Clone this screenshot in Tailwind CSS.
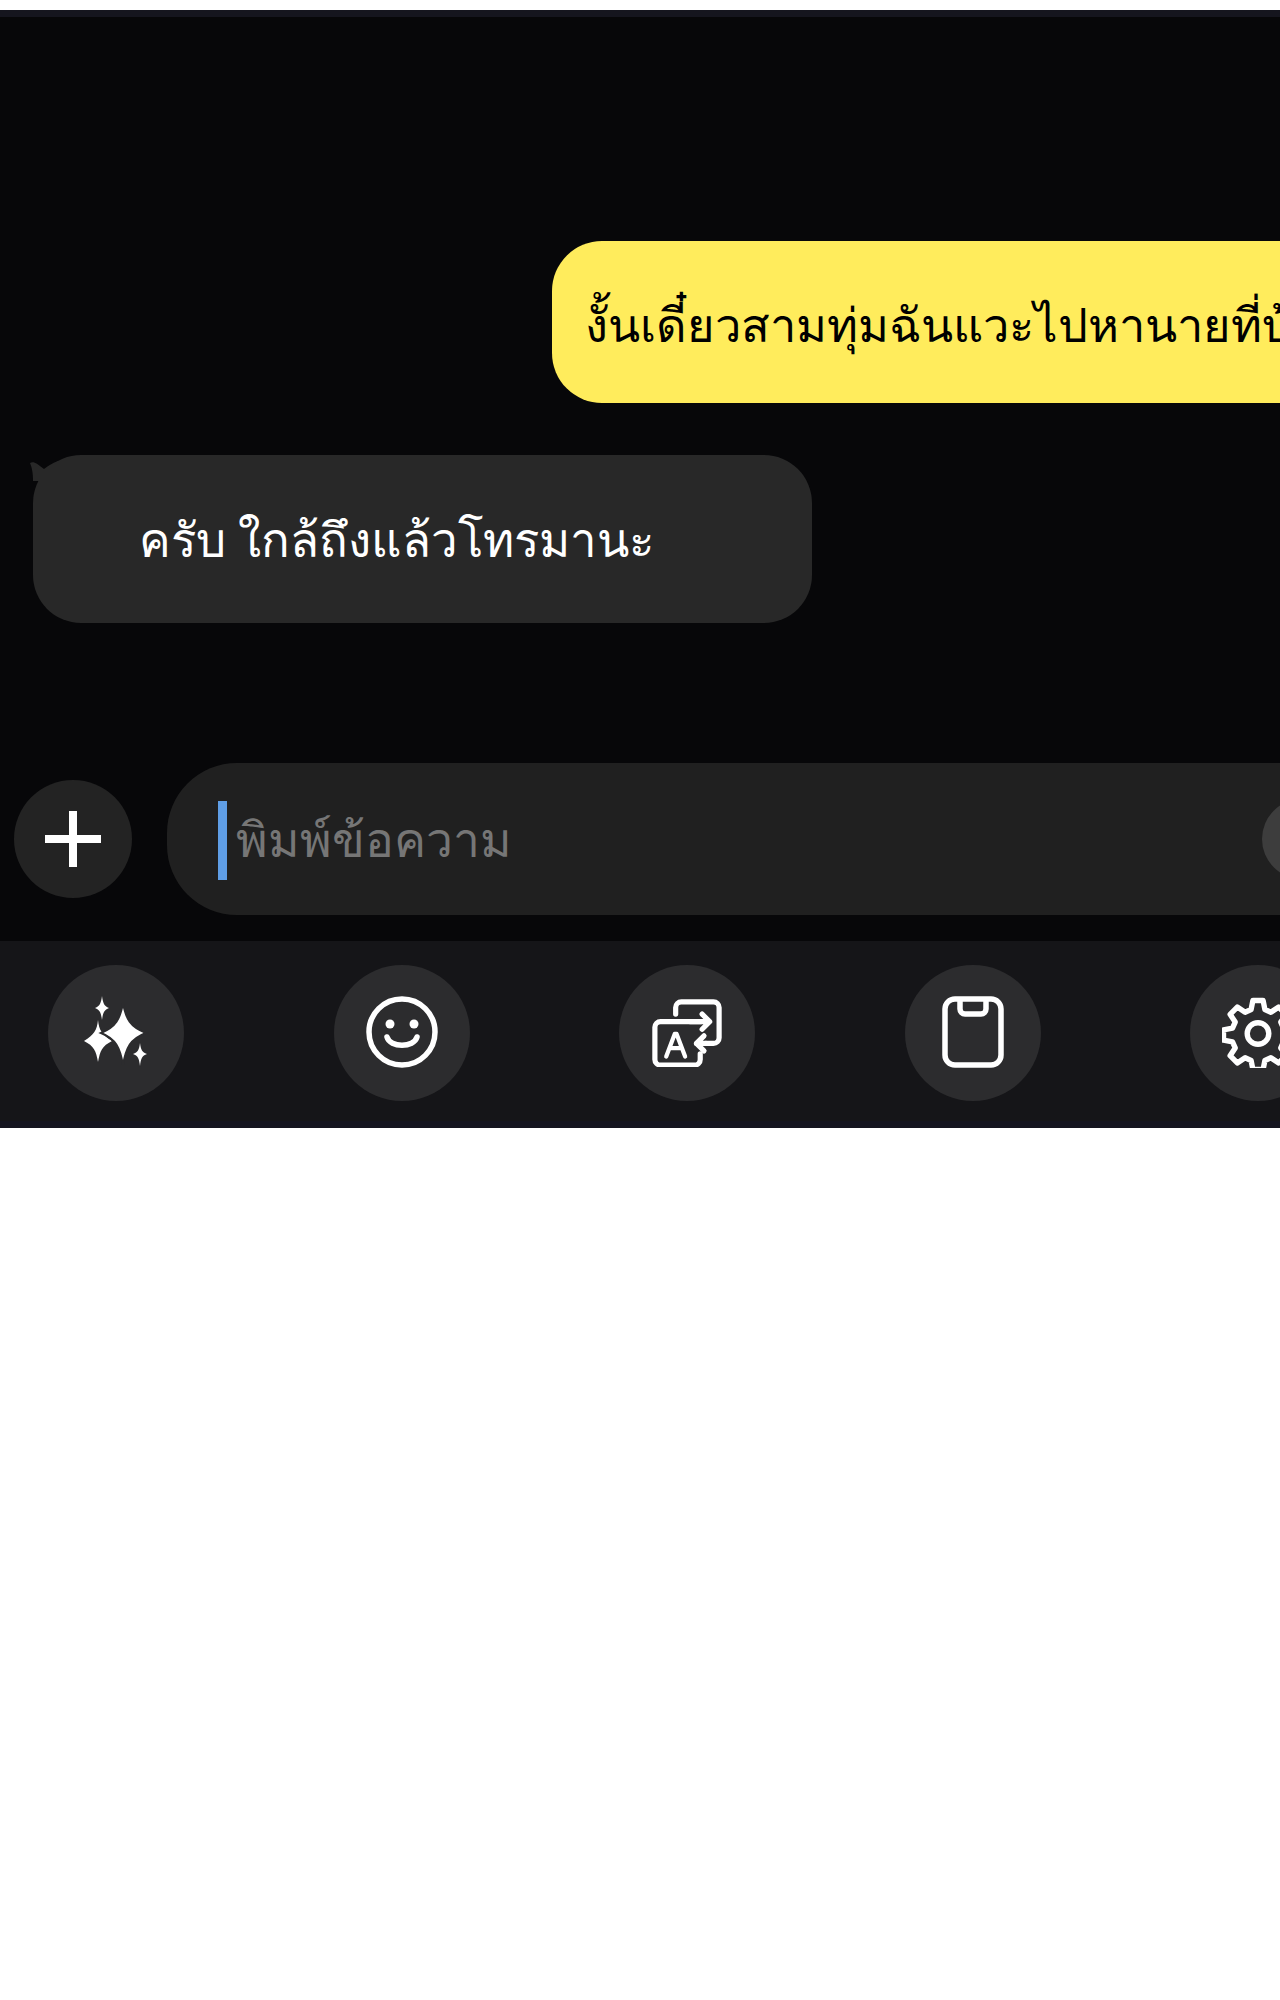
<!DOCTYPE html>
<html lang="th">
<head>
    <meta charset="UTF-8">
    <meta name="viewport" content="width=device-width, initial-scale=1.0">
    <title>แชท</title>
    <script src="https://cdn.jsdelivr.net/npm/@tailwindcss/browser@4"></script>
</head>
<body class="bg-white font-['Noto_Sans','Liberation_Sans',sans-serif] overflow-hidden">
    <div class="w-[1280px] h-[2000px] overflow-hidden pt-[10px]">
        <!-- pantalla -->
        <div class="h-[1118px] flex flex-col bg-[#070709] overflow-hidden">
            <div class="h-[7px] shrink-0 bg-[#15151e]"></div>

            <!-- mensajes -->
            <div class="h-[224px] shrink-0"></div>
            <div class="h-[162px] shrink-0 ml-[552px] w-[900px] bg-[#ffec5c] rounded-l-[50px] flex items-center pl-[33px]">
                <span class="text-[47px] leading-none pt-[5px] text-black whitespace-nowrap">งั้นเดี๋ยวสามทุ่มฉันแวะไปหานายที่บ้านนะ</span>
            </div>
            <div class="relative mt-[52px] ml-[33px] w-[779px] h-[168px] shrink-0 bg-[#282828] rounded-[48px] flex items-center pl-[106px]">
                <svg class="absolute left-[-3px] top-[6px]" width="40" height="20" viewBox="0 0 40 20"><path d="M0 2c4-2 7 1 14 6 4-3 8-6 14-8h12v20H3C3 12 2 7 0 2z" fill="#282828"/></svg>
                <span class="text-[47.4px] leading-none text-white whitespace-nowrap">ครับ ใกล้ถึงแล้วโทรมานะ</span>
            </div>

            <!-- caja de texto -->
            <div class="flex items-center mt-[140px] h-[152px] shrink-0 pl-[14px]">
                <button class="w-[118px] h-[118px] shrink-0 rounded-full bg-[#232323] flex items-center justify-center">
                    <svg width="56" height="56" viewBox="0 0 56 56"><path d="M28 0v56M0 28h56" stroke="#fff" stroke-width="8"/></svg>
                </button>
                <div class="ml-[35px] w-[1200px] h-[152px] shrink-0 bg-[#202020] rounded-l-[70px] flex items-center pl-[51px] pr-[25px]">
                    <div class="w-[9px] h-[79px] mt-[2px] bg-[#5f9ee6] shrink-0"></div>
                    <span class="ml-[9px] text-[48px] leading-none text-[#767676] whitespace-nowrap">พิมพ์ข้อความ</span>
                    <div class="ml-auto w-[80px] h-[80px] shrink-0 rounded-full bg-[#3d3d3d]"></div>
                </div>
            </div>

            <!-- barra de herramientas -->
            <div class="mt-[26px] flex-1 bg-[#151518] relative">
                <div class="flex gap-[149.6px] pl-[48px] pt-[24px] w-[1500px]">
                    <button class="w-[136px] h-[136px] shrink-0 rounded-full bg-[#2c2c2e] flex items-center justify-center">
                        <svg class="mt-[-2px]" width="72" height="72" viewBox="0 0 72 72" fill="#fff">
                            <path d="M18 24c1 10 4 15 14 21-10 5-12 10-14 21-2-11-4-16-14-21 10-6 13-11 14-21z"/>
                            <path d="M43 7c3 16 7 24 23 30-16 6-20 15-23 32-3-17-7-26-22-32 15-6 19-14 22-30z" stroke="#2c2c2e" stroke-width="2"/>
                            <path d="M22 0c1 7 2 10 7 12-5 2-6 5-7 12-1-7-2-10-7-12 5-2 6-5 7-12z"/>
                            <path d="M60 47c1 7 2 9 7 11-5 2-6 4-7 12-1-8-2-10-7-12 5-2 6-4 7-11z"/>
                        </svg>
                    </button>
                    <button class="w-[136px] h-[136px] shrink-0 rounded-full bg-[#2c2c2e] flex items-center justify-center">
                        <svg class="mt-[-2px]" width="72" height="72" viewBox="0 0 72 72" fill="none" stroke="#fff" stroke-width="5.5">
                            <circle cx="36" cy="36" r="33"/>
                            <circle cx="24" cy="28" r="4.5" fill="#fff" stroke="none"/>
                            <circle cx="48" cy="28" r="4.5" fill="#fff" stroke="none"/>
                            <path d="M21 41c3 11 27 11 30 0" stroke-linecap="round"/>
                        </svg>
                    </button>
                    <button class="w-[136px] h-[136px] shrink-0 rounded-full bg-[#2c2c2e] flex items-center justify-center">
                        <svg width="70" height="68" viewBox="0 0 72 72" fill="none" stroke="#fff" stroke-width="5.5" stroke-linecap="round" stroke-linejoin="round">
                            <path d="M24 16V9a6 6 0 0 1 6-6h34a6 6 0 0 1 6 6v32a6 6 0 0 1-6 6h-8"/>
                            <path d="M50 24H8a6 6 0 0 0-6 6v34a6 6 0 0 0 6 6h36a6 6 0 0 0 6-6v-6"/>
                            <path d="M40 24h18M52 16l8 8-8 8"/>
                            <path d="M46 47h10M54 39l-8 8 8 8" />
                            <path d="M14 61l9-24h2l9 24M18 52h12" stroke-width="4.5"/>
                        </svg>
                    </button>
                    <button class="w-[136px] h-[136px] shrink-0 rounded-full bg-[#2c2c2e] flex items-center justify-center">
                        <svg class="mt-[-2px]" width="62" height="72" viewBox="0 0 62 72" fill="none" stroke="#fff" stroke-width="5.5" stroke-linejoin="round">
                            <rect x="3" y="3" width="56" height="66" rx="10"/>
                            <path d="M18 3v10a5 5 0 0 0 5 5h16a5 5 0 0 0 5-5V3"/>
                        </svg>
                    </button>
                    <button class="w-[136px] h-[136px] shrink-0 rounded-full bg-[#2c2c2e] flex items-center justify-center">
                        <svg class="mt-[-3px]" width="72" height="72" viewBox="0 0 24 24" fill="none" stroke="#fff" stroke-width="1.8" stroke-linejoin="round">
                            <path d="M10.3 1.5h3.4l.6 3 2 .9 2.6-1.7 2.4 2.4-1.7 2.6.9 2 3 .6v3.4l-3 .6-.9 2 1.7 2.6-2.4 2.4-2.6-1.7-2 .9-.6 3h-3.4l-.6-3-2-.9-2.6 1.7-2.4-2.4 1.7-2.6-.9-2-3-.6v-3.4l3-.6.9-2-1.7-2.6 2.4-2.4 2.6 1.7 2-.9z"/>
                            <circle cx="12" cy="12.5" r="3.6"/>
                        </svg>
                    </button>
                </div>
                <div class="absolute bottom-0 left-0 right-0 h-[7px] bg-[#14141f]"></div>
            </div>
        </div>
    </div>
</body>
</html>
